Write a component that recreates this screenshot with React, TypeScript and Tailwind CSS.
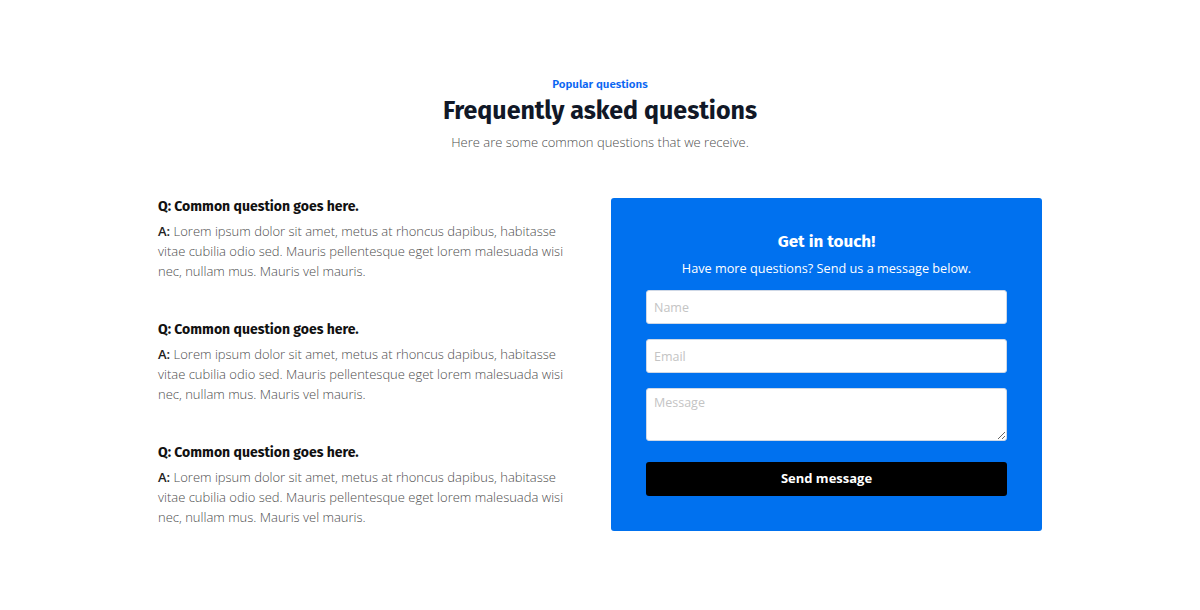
import React from "react";

const heading = { fontFamily: '"Fira Sans", Lato, "Open Sans", sans-serif' };

function QA() {
  return (
    <div className="flex flex-col">
      <h3 className="text-[14px] font-bold leading-[20px] text-[#111]" style={heading}>
        Q: Common question goes here.
      </h3>
      <p className="mt-[4px] text-[13px] leading-[20px] font-light text-[#4d4d4d]">
        <span className="font-semibold text-[#222]">A:</span> Lorem ipsum dolor sit amet, metus at rhoncus dapibus, habitasse vitae cubilia odio sed. Mauris pellentesque eget lorem malesuada wisi nec, nullam mus. Mauris vel mauris.
      </p>
    </div>
  );
}

export default function App() {
  return (
    <div className="w-[1200px] h-[610px] bg-white" style={{ fontFamily: '"Open Sans", "Noto Sans", sans-serif' }}>
      <div className="flex flex-col items-center pt-[76px]">
        <div className="text-[11.5px] leading-[16px] font-semibold text-[#0a66f2]" style={heading}>Popular questions</div>
        <h1 className="mt-[4px] text-[25px] leading-[30px] font-bold text-[#111827]" style={heading}>Frequently asked questions</h1>
        <p className="mt-[6px] text-[13px] leading-[20px] font-light text-[#4d4d4d]">Here are some common questions that we receive.</p>
      </div>
      <div className="mx-auto mt-[45px] flex w-[884px] items-start justify-between">
        <div className="flex w-[412px] flex-col gap-[39px]">
          <QA />
          <QA />
          <QA />
        </div>
        <div className="mt-[1px] w-[431px] h-[333px] rounded-[3px] bg-[#0071ef] px-[35px] pt-[32px]">
          <h2 className="text-center text-[17px] leading-[24px] font-bold text-white" style={heading}>Get in touch!</h2>
          <p className="mt-[4px] text-center text-[12.7px] leading-[20px] text-white">Have more questions? Send us a message below.</p>
          <div className="mt-[12px] flex flex-col">
            <input className="h-[34px] w-full rounded-[3px] border border-[#cfd8e6] bg-white px-[7px] text-[12.5px] outline-none placeholder:text-[#c4c4c4]" placeholder="Name" />
            <input className="mt-[15px] h-[34px] w-full rounded-[3px] border border-[#cfd8e6] bg-white px-[7px] text-[12.5px] outline-none placeholder:text-[#c4c4c4]" placeholder="Email" />
            <textarea className="mt-[15px] h-[53px] w-full rounded-[3px] border border-[#cfd8e6] bg-white px-[7px] py-[5px] text-[12.5px] leading-[18px] outline-none placeholder:text-[#c4c4c4]" placeholder="Message" />
            <button className="mt-[21px] h-[34px] w-full rounded-[3px] bg-black text-[13px] font-bold text-white">Send message</button>
          </div>
        </div>
      </div>
    </div>
  );
}
